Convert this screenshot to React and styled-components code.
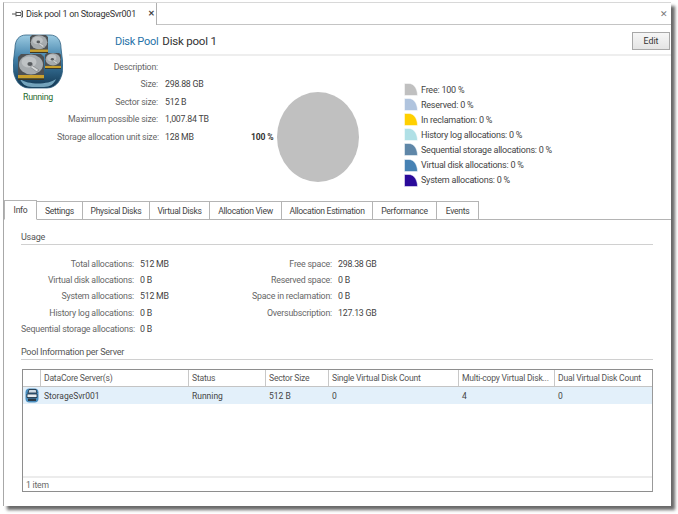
import React from "react";
import styled, { createGlobalStyle } from "styled-components";

const Global = createGlobalStyle`
  html, body { margin: 0; padding: 0; background: #fff; }
  body { font-family: Roboto, "Liberation Sans", sans-serif; font-size: 8.8px; color: #333; }
`;
const Page = styled.div`
  width: 678px; height: 514px; overflow: hidden; background: #fff; padding: 2px 0 0 3px; box-sizing: border-box;
`;
const Window = styled.div`
  width: 668px; height: 504px; box-sizing: border-box; background: #fff;
  border-left: 1px solid #a8a8a8; border-top: 1px solid #d8d8d8;
  box-shadow: 4px 4px 3px #6a6a6a;
  display: flex; flex-direction: column;
`;
const TopBar = styled.div`
  height: 21px; flex: none; display: flex; justify-content: space-between; align-items: flex-start;
  border-bottom: 1px solid #c4c4c4; box-sizing: content-box;
`;
const DocTab = styled.div`
  width: 153px; height: 22px; box-sizing: border-box; background: #fff; border-right: 1px solid #b0b0b0;
  display: flex; align-items: center; padding: 0 0 0 8px; gap: 1px; font-size: 9px; letter-spacing: -0.28px; color: #333; white-space: nowrap;
`;
const TabPin = styled.svg`
  flex: none;
`;
const CloseGlyph = styled.span`
  margin-left: 11px; font-size: 8px; font-weight: 600; color: #444; line-height: 1;
`;
const WinClose = styled.span`
  margin: 7px 3px 0 0; font-size: 9px; color: #777; line-height: 1;
`;
const Hero = styled.div`
  height: 174px; flex: none; display: flex;
`;
const StatusCol = styled.div`
  width: 62px; flex: none; display: flex; flex-direction: column; align-items: center; padding-top: 9px; margin-left: 3px;
`;
const RunningLabel = styled.div`
  color: #1f6b2e; font-size: 8.8px; letter-spacing: -0.3px; margin-top: 2px; line-height: 12px;
`;
const HeroMain = styled.div`
  flex: 1; display: flex; flex-direction: column; min-width: 0;
`;
const TitleBar = styled.div`
  height: 29px; flex: none; box-sizing: content-box; border-bottom: 2px solid #eeeeee; display: flex; align-items: center;
  padding-left: 46px; padding-right: 1px;
`;
const TitleBlue = styled.span`
  color: #1f72a8; font-size: 11px; letter-spacing: -0.3px; margin-right: 4px; margin-top: 3px;
`;
const TitleText = styled.span`
  color: #333; font-size: 11.5px; letter-spacing: -0.2px; flex: 1; margin-top: 2px;
`;
const EditButton = styled.button`
  width: 38px; height: 18px; padding: 0; font: inherit; font-size: 8.8px; color: #333; margin-top: 3px;
  background: linear-gradient(#f6f6f6, #e4e4e4); border: 1px solid #a8a8a8; border-radius: 0;
`;
const HeroBody = styled.div`
  flex: 1; display: flex;
`;
const PropGrid = styled.div`
  width: 172px; margin-left: -12px; flex: none; display: grid; grid-template-columns: 101px auto; column-gap: 7px;
  grid-auto-rows: 17.5px; align-items: center; align-content: start; padding-top: 2px; white-space: nowrap;
`;
const Label = styled.div`
  text-align: right; color: #666; font-size: 8.8px; letter-spacing: -0.2px;
`;
const Value = styled.div`
  color: #444; font-size: 8.8px; letter-spacing: -0.25px;
`;
const ChartArea = styled.div`
  width: 125px; margin-left: 22px; display: flex; align-items: center;
`;
const PieLabel = styled.div`
  font-weight: 700; font-size: 8.6px; letter-spacing: -0.2px; color: #333; width: 25px; flex: none; white-space: nowrap; margin-top: 19px;
`;
const PieSvg = styled.svg`
  margin-top: 19px; flex: none;
`;
const Legend = styled.ul`
  list-style: none; margin: 26px 0 0 28px; padding: 0; display: flex; flex-direction: column;
`;
const LegendRow = styled.li`
  height: 15.1px; display: flex; align-items: center; gap: 3px; color: #444; font-size: 9px; letter-spacing: -0.23px; white-space: nowrap;
`;
const TabStrip = styled.div`
  height: 20px; flex: none; box-sizing: content-box; display: flex; align-items: flex-end; border-bottom: 1px solid #b4b4b4;
`;
const Tab = styled.div`
  box-sizing: border-box; width: ${p => p.$w}px; height: ${p => p.$active ? 20 : 18}px;
  margin-bottom: ${p => p.$active ? -1 : 0}px;
  border: 1px solid #b4b4b4; border-left: ${p => p.$first ? "1px solid #b4b4b4" : "none"};
  border-bottom: ${p => p.$active ? "1px solid #fff" : "none"};
  background: #fff; display: flex; align-items: center; justify-content: center; font-size: 8.6px; letter-spacing: -0.3px; color: #444; white-space: nowrap;
`;
const TabBody = styled.div`
  flex: 1; padding: 11px 18px 0 17px; display: flex; flex-direction: column; min-height: 0;
`;
const SectionTitle = styled.div`
  height: 13px; line-height: 12px; border-bottom: 1px solid #d0d0d0; color: #555; font-size: 9px; letter-spacing: -0.25px; flex: none;
`;
const UsageCols = styled.div`
  display: flex; padding-top: 11px; height: 95px; flex: none; box-sizing: border-box; margin-bottom: 6px;
`;
const UsageGrid = styled.div`
  display: grid; grid-template-columns: ${p => p.$label}px auto; column-gap: 6px; grid-auto-rows: 16.2px; align-items: center; align-content: start; white-space: nowrap; width: ${p => p.$w}px; flex: none;
`;
const Table = styled.div`
  margin-top: 9px; height: 123px; flex: none; border: 1px solid #8e8e8e; border-right-color: #999; display: flex; flex-direction: column; margin-left: 1px; box-sizing: border-box;
`;
const Row = styled.div`
  display: grid; grid-template-columns: 18px 148px 77px 63px 130px 96px 1fr; flex: none; height: ${p => p.$h}px; background: ${p => p.$bg || "transparent"};
  border-bottom: ${p => p.$line ? "1px solid #c4c4c4" : "none"}; box-sizing: border-box;
`;
const HeadCell = styled.div`
  border-right: 1px solid #c8c8c8; padding-left: 3px; display: flex; align-items: center; color: #555; font-size: 8.6px; letter-spacing: -0.22px; white-space: nowrap; overflow: hidden;
  &:last-child { border-right: none; }
`;
const Cell = styled.div`
  padding-left: 3px; display: flex; align-items: center; color: #444; font-size: 8.5px; white-space: nowrap;
`;
const IconCell = styled.div`
  display: flex; align-items: center; justify-content: center;
`;
const TableFill = styled.div`
  flex: 1;
`;
const Footer = styled.div`
  height: 15px; flex: none; box-sizing: border-box; border-top: 2px solid #ececec; padding: 1px 0 0 3px; display: flex; align-items: center; color: #666; font-size: 8.6px; letter-spacing: -0.2px;
`;

const PinIcon = () => (
  <TabPin width="13" height="8" viewBox="0 0 13 8">
    <path d="M0 4h4M4 1.5v5M4 2.5h5v3H4M9 1h1.5v6H9" fill="none" stroke="#555" strokeWidth="1" />
  </TabPin>
);

const Disk = ({ x, y, w }) => {
  const s = w / 26;
  return (
    <g transform={`translate(${x} ${y}) scale(${s})`}>
      <path d="M3 0h20l3 3v19H0V3z" fill="#4d5154" />
      <ellipse cx="13" cy="10.5" rx="12" ry="10" fill="#a6abae" />
      <ellipse cx="11" cy="8" rx="7.5" ry="5.5" fill="#bfc3c5" />
      <ellipse cx="12" cy="10" rx="2.6" ry="2" fill="#585c5f" />
      <path d="M14 11.5l7 4.5-2.5 1.6-6-4.4z" fill="#d4d7d8" stroke="#55595c" strokeWidth=".4" />
      <rect x="0" y="21" width="26" height="3.5" fill="#c9a02e" />
      <rect x="0" y="24.5" width="26" height="1.5" fill="#3c3724" />
    </g>
  );
};

const PoolIcon = () => (
  <svg width="50" height="55" viewBox="0 0 50 55">
    <defs>
      <linearGradient id="pg" x1="0" y1="0" x2="0" y2="1">
        <stop offset="0" stopColor="#9ccbe2" />
        <stop offset=".45" stopColor="#3f7fa8" />
        <stop offset="1" stopColor="#123650" />
      </linearGradient>
    </defs>
    <path d="M13 1h24c7 0 11 5 11 13l2 17c0 15-7 23-16 23H16C7 54 0 46 0 31l2-17C2 6 6 1 13 1z" fill="url(#pg)" stroke="#2f5f80" strokeWidth=".8" />
    <path d="M7 45c8 6 28 6 36 0-2 5-6 8-12 8H19c-6 0-10-3-12-8z" fill="#9bcfe6" opacity=".7" />
    <Disk x={17} y={1} w={18} />
    <Disk x={32} y={19} w={16} />
    <Disk x={5} y={20} w={26} />
  </svg>
);

const ServerIcon = () => (
  <svg width="14" height="15" viewBox="0 0 14 15">
    <rect x="0.5" y="0.5" width="13" height="14" rx="4" fill="#4a8fc0" />
    <path d="M4 1.5h7l1 3.5H3z" fill="#cfdbe4" stroke="#16283a" strokeWidth=".8" />
    <path d="M2 6h10v3.5H2z" fill="#e8eef2" stroke="#16283a" strokeWidth=".8" />
    <path d="M3 10.5h8v2.5H3z" fill="#2c3a46" />
  </svg>
);

const Swatch = ({ color }) => (
  <svg width="14" height="13" viewBox="0 0 14 13">
    <path d="M0.5 0.5H5C10 0.5 13.5 6 13.5 12.5H0.5Z" fill={color} stroke="#fff" strokeWidth=".5" />
  </svg>
);

const legend = [
  ["#c0c0c0", "Free: 100 %"],
  ["#b0c4de", "Reserved: 0 %"],
  ["#ffd000", "In reclamation: 0 %"],
  ["#b0e0e6", "History log allocations: 0 %"],
  ["#5f87a8", "Sequential storage allocations: 0 %"],
  ["#4682b4", "Virtual disk allocations: 0 %"],
  ["#2a0a9a", "System allocations: 0 %"],
];
const props = [
  ["Description:", ""],
  ["Size:", "298.88 GB"],
  ["Sector size:", "512 B"],
  ["Maximum possible size:", "1,007.84 TB"],
  ["Storage allocation unit size:", "128 MB"],
];
const usageA = [
  ["Total allocations:", "512 MB"],
  ["Virtual disk allocations:", "0 B"],
  ["System allocations:", "512 MB"],
  ["History log allocations:", "0 B"],
  ["Sequential storage allocations:", "0 B"],
];
const usageB = [
  ["Free space:", "298.38 GB"],
  ["Reserved space:", "0 B"],
  ["Space in reclamation:", "0 B"],
  ["Oversubscription:", "127.13 GB"],
];
const tabs = [
  ["Info", 33], ["Settings", 46], ["Physical Disks", 67], ["Virtual Disks", 60], ["Allocation View", 72],
  ["Allocation Estimation", 91], ["Performance", 64], ["Events", 42],
];
const heads = ["", "DataCore Server(s)", "Status", "Sector Size", "Single Virtual Disk Count", "Multi-copy Virtual Disk...", "Dual Virtual Disk Count"];

export default function App() {
  return (
    <Page>
      <Global />
      <Window>
        <TopBar>
          <DocTab>
            <PinIcon />
            <span>Disk pool 1 on StorageSvr001</span>
            <CloseGlyph>✕</CloseGlyph>
          </DocTab>
          <WinClose>✕</WinClose>
        </TopBar>
        <Hero>
          <StatusCol>
            <PoolIcon />
            <RunningLabel>Running</RunningLabel>
          </StatusCol>
          <HeroMain>
            <TitleBar>
              <TitleBlue>Disk Pool</TitleBlue>
              <TitleText>Disk pool 1</TitleText>
              <EditButton>Edit</EditButton>
            </TitleBar>
            <HeroBody>
              <PropGrid>
                {props.map(([l, v]) => (
                  <React.Fragment key={l}>
                    <Label>{l}</Label>
                    <Value>{v}</Value>
                  </React.Fragment>
                ))}
              </PropGrid>
              <ChartArea>
                <PieLabel>100 %</PieLabel>
                <PieSvg width="84" height="92" viewBox="0 0 84 92">
                  <ellipse cx="42" cy="46" rx="41" ry="45" fill="#c0c0c0" />
                </PieSvg>
              </ChartArea>
              <Legend>
                {legend.map(([c, t]) => (
                  <LegendRow key={t}><Swatch color={c} />{t}</LegendRow>
                ))}
              </Legend>
            </HeroBody>
          </HeroMain>
        </Hero>
        <TabStrip>
          {tabs.map(([t, w], i) => (
            <Tab key={t} $w={w} $active={i === 0} $first={i === 0}>{t}</Tab>
          ))}
        </TabStrip>
        <TabBody>
          <SectionTitle>Usage</SectionTitle>
          <UsageCols>
            <UsageGrid $label={113} $w={231}>
              {usageA.map(([l, v]) => (
                <React.Fragment key={l}>
                  <Label>{l}</Label>
                  <Value>{v}</Value>
                </React.Fragment>
              ))}
            </UsageGrid>
            <UsageGrid $label={80} $w={200}>
              {usageB.map(([l, v]) => (
                <React.Fragment key={l}>
                  <Label>{l}</Label>
                  <Value>{v}</Value>
                </React.Fragment>
              ))}
            </UsageGrid>
          </UsageCols>
          <SectionTitle>Pool Information per Server</SectionTitle>
          <Table>
            <Row $h={17} $line>
              {heads.map((h, i) => <HeadCell key={i}>{h}</HeadCell>)}
            </Row>
            <Row $h={17} $bg="#e3f0fa">
              <IconCell><ServerIcon /></IconCell>
              <Cell>StorageSvr001</Cell>
              <Cell>Running</Cell>
              <Cell>512 B</Cell>
              <Cell>0</Cell>
              <Cell>4</Cell>
              <Cell>0</Cell>
            </Row>
            <TableFill />
            <Footer>1 item</Footer>
          </Table>
        </TabBody>
      </Window>
    </Page>
  );
}
